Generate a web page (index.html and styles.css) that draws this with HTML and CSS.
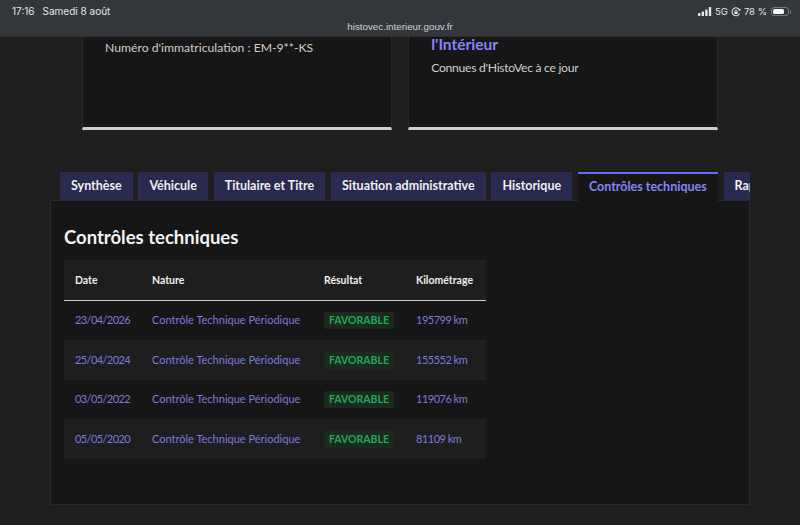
FILE: index.html
```html
<!DOCTYPE html>
<html lang="fr">
<head>
    <meta charset="UTF-8">
    <title>HistoVec</title>
    <link rel="stylesheet" href="styles.css">
</head>
<body>

    <header class="browser-bar">
        <div class="status-row">
            <div class="status-left">
                <span>17:16</span>
                <span>Samedi 8 août</span>
            </div>
            <div class="status-right">
                <svg class="signal" width="14" height="9" viewBox="0 0 14 9">
                    <rect x="0" y="6" width="2.4" height="3" rx=".5"/>
                    <rect x="3.6" y="4.4" width="2.4" height="4.6" rx=".5"/>
                    <rect x="7.2" y="2.4" width="2.4" height="6.6" rx=".5"/>
                    <rect x="10.8" y="0" width="2.4" height="9" rx=".5"/>
                </svg>
                <span>5G</span>
                <svg class="lock" width="10" height="10" viewBox="0 0 10 10">
                    <path d="M8.6 6.6A4 4 0 1 1 8.7 3.2" fill="none" stroke="#e4e6e7" stroke-width="1.1"/>
                    <path d="M9.6 1.8 9.2 4.2 7.2 3z" fill="#e4e6e7"/>
                    <rect x="3.3" y="4.4" width="3.4" height="2.6" rx=".4" fill="#e4e6e7"/>
                    <path d="M4 4.5V3.8a1 1 0 0 1 2 0v.7" fill="none" stroke="#e4e6e7" stroke-width=".7"/>
                </svg>
                <span>78 %</span>
                <div class="battery"><div class="battery-level"></div></div>
            </div>
        </div>
        <div class="url">histovec.interieur.gouv.fr</div>
    </header>

    <section class="cards">
        <div class="card">
            <p class="card-text card-text-plate">Numéro d'immatriculation : EM-9**-KS</p>
        </div>
        <div class="card">
            <h3 class="card-title">l'Intérieur</h3>
            <p class="card-text card-text-known">Connues d'HistoVec à ce jour</p>
        </div>
    </section>

    <main class="tabs-wrap">
        <ul class="tabs">
            <li class="tab">Synthèse</li>
            <li class="tab">Véhicule</li>
            <li class="tab">Titulaire et Titre</li>
            <li class="tab">Situation administrative</li>
            <li class="tab">Historique</li>
            <li class="tab tab-active">Contrôles techniques</li>
            <li class="tab">Rapport</li>
        </ul>

        <div class="panel">
            <h2>Contrôles techniques</h2>
            <table>
                <thead>
                    <tr>
                        <th class="col-date">Date</th>
                        <th class="col-nature">Nature</th>
                        <th class="col-result">Résultat</th>
                        <th class="col-km">Kilométrage</th>
                    </tr>
                </thead>
                <tbody>
                    <tr>
                        <td class="cell-date">23/04/2026</td>
                        <td>Contrôle Technique Périodique</td>
                        <td class="cell-result"><span class="badge">FAVORABLE</span></td>
                        <td class="cell-km">195799 km</td>
                    </tr>
                    <tr>
                        <td class="cell-date">25/04/2024</td>
                        <td>Contrôle Technique Périodique</td>
                        <td class="cell-result"><span class="badge">FAVORABLE</span></td>
                        <td class="cell-km">155552 km</td>
                    </tr>
                    <tr>
                        <td class="cell-date">03/05/2022</td>
                        <td>Contrôle Technique Périodique</td>
                        <td class="cell-result"><span class="badge">FAVORABLE</span></td>
                        <td class="cell-km">119076 km</td>
                    </tr>
                    <tr>
                        <td class="cell-date">05/05/2020</td>
                        <td>Contrôle Technique Périodique</td>
                        <td class="cell-result"><span class="badge">FAVORABLE</span></td>
                        <td class="cell-km">81109 km</td>
                    </tr>
                </tbody>
            </table>
        </div>
    </main>

</body>
</html>
```

FILE: styles.css
```css
* {
    margin: 0;
    padding: 0;
    box-sizing: border-box;
}

html, body {
    height: 525px;
    overflow: hidden;
}

body {
    background: #1e1e1e;
    color: #cecece;
    font-family: Lato, "Noto Sans", sans-serif;
}

/* tablet status bar + url */
.browser-bar {
    height: 37px;
    background: #33373b;
    color: #e4e6e7;
    font-family: Inter, "Liberation Sans", sans-serif;
    border-bottom: 1px solid #2a2d30;
}

.status-row {
    display: flex;
    justify-content: space-between;
    height: 21px;
    padding: 4px 11px 0 12px;
    font-size: 10px;
    line-height: 15px;
}

.status-left {
    display: flex;
    gap: 8px;
}

.status-right {
    display: flex;
    align-items: center;
    gap: 3px;
    height: 15px;
    font-size: 9.5px;
}

.signal {
    fill: #e4e6e7;
}

.battery {
    position: relative;
    width: 18px;
    height: 9px;
    margin-left: 1px;
    padding: 1px;
    border: 1px solid #74787b;
    border-radius: 3px;
}

.battery::after {
    content: "";
    position: absolute;
    top: 1.5px;
    right: -3px;
    width: 1.5px;
    height: 4px;
    background: #74787b;
}

.battery-level {
    width: 78%;
    height: 100%;
    background: #f4f5f5;
    border-radius: 1.5px;
}

.url {
    text-align: center;
    font-family: "Liberation Sans", sans-serif;
    font-size: 9.8px;
    line-height: 12px;
    color: #cfd2d4;
}

/* cards on top, cut by the bar */
.cards {
    display: flex;
    gap: 16.5px;
    padding: 0 82px;
}

.card {
    flex: 1;
    height: 93px;
    background: #161616;
    border: 1px solid #2a2a2a;
    border-top: none;
    border-bottom: 3px solid #cecece;
}

.card-text {
    padding-left: 22px;
    font-size: 12.2px;
    line-height: 18px;
    color: #cecece;
}

.card-text-plate {
    margin-top: 2px;
}

.card-text-known {
    letter-spacing: -.3px;
}

.card-title {
    padding-left: 22px;
    font-size: 15.5px;
    line-height: 14px;
    font-weight: 700;
    color: #8585f6;
    margin-bottom: 8px;
}

/* tabs */
.tabs-wrap {
    width: 700px;
    margin: 42px 0 0 50px;
}

.tabs {
    position: relative;
    z-index: 1;
    display: flex;
    align-items: flex-start;
    gap: 5.8px;
    height: 29px;
    margin: 0 0 -1px 10px;
    list-style: none;
    overflow: hidden;
}

.tab {
    flex: none;
    height: 28px;
    padding: 0 11px;
    background: #2a2a4e;
    color: #eeeeee;
    font-size: 12.5px;
    font-weight: 700;
    line-height: 28px;
    white-space: nowrap;
}

.tab-active {
    height: 29px;
    background: #161616;
    color: #8585f6;
    border-top: 2px solid #6a6af4;
    line-height: 25px;
}

.panel {
    height: 305px;
    padding: 25px 13px 0;
    background: #161616;
    border: 1px solid #2a2a2a;
}

h2 {
    color: #f2f2f2;
    font-size: 18.5px;
    font-weight: 700;
    line-height: 22px;
    margin-bottom: 12px;
}

table {
    width: 422px;
    table-layout: fixed;
    border-collapse: collapse;
    font-size: 11px;
}

th {
    height: 40px;
    padding: 0 11px;
    background: #1e1e1e;
    border-bottom: 1px solid #cecece;
    color: #eeeeee;
    font-size: 10.5px;
    font-weight: 700;
    text-align: left;
}

.col-date {
    width: 77px;
}

.col-nature {
    width: 172px;
}

.col-result {
    width: 92px;
}

.col-km {
    width: 81px;
}

td {
    height: 40px;
    padding: 0 11px 2px;
    color: #7b7bdb;
    white-space: nowrap;
}

tbody tr:nth-child(3) td {
    height: 39px;
}

td.cell-result {
    padding-bottom: 0;
}

.cell-date {
    letter-spacing: -.6px;
}

.cell-km {
    letter-spacing: -.5px;
}

tbody tr:nth-child(even) {
    background: #1e1e1e;
}

.badge {
    display: inline-block;
    padding: 0 5px;
    background: #1a2a1e;
    border-radius: 3px;
    color: #27a658;
    font-size: 10.5px;
    font-weight: 700;
    line-height: 17px;
    vertical-align: middle;
}
```
